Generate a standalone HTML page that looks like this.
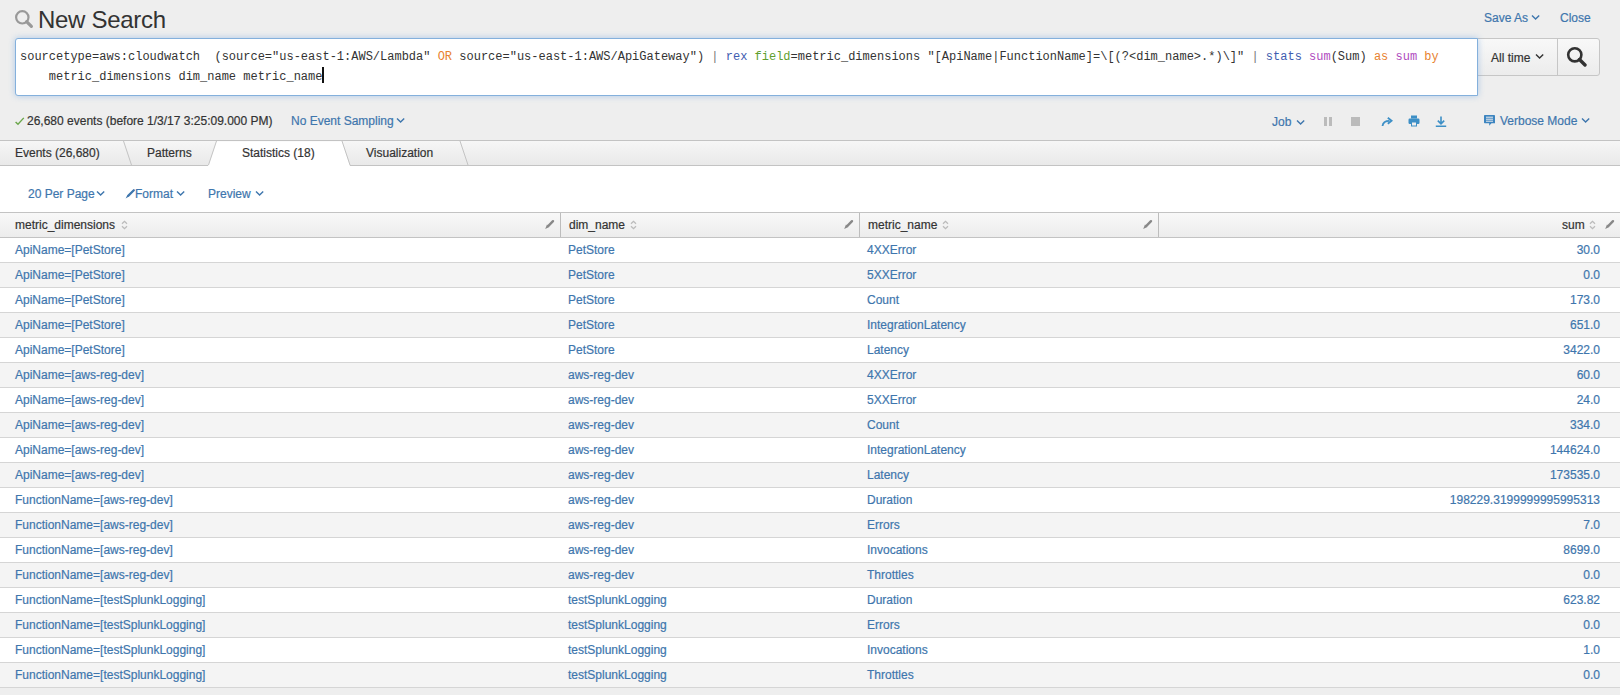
<!DOCTYPE html>
<html><head><meta charset="utf-8">
<style>
*{box-sizing:border-box;margin:0;padding:0}
html,body{width:1620px;height:695px;overflow:hidden;background:#eeeeee;font-family:"Liberation Sans",sans-serif;color:#333}
.abs{position:absolute}
.lnk{color:#3e76ad}
#title{left:38px;top:6px;font-size:24px;color:#333;white-space:nowrap;letter-spacing:-0.3px}
#sbox{left:15px;top:38px;width:1463px;height:58px;background:#fff;border:1px solid #84b0dc;border-radius:3px 0 0 3px;box-shadow:0 0 6px rgba(90,155,225,.45)}
#q{left:20px;top:47px;font-family:"Liberation Mono",monospace;font-size:12px;line-height:20px;white-space:pre;color:#333}
.pipe{color:#777}.cmd{color:#3f5db0}.fn{color:#b04cc0}.kw{color:#e8822f}.arg{color:#5f9f30}
#tp{left:1477px;top:38px;width:81px;height:38px;background:linear-gradient(#f8f8f8,#ececec);border:1px solid #c6c6c6;border-left:none}
#sb{left:1557px;top:38px;width:43px;height:38px;background:linear-gradient(#f8f8f8,#ececec);border:1px solid #c6c6c6;border-radius:0 3px 3px 0}
.t12{font-size:12px;white-space:nowrap;-webkit-text-stroke:0.2px}
#tabs{left:0;top:140px;width:1620px;height:26px;background:linear-gradient(#f6f6f6,#e9e9e9);border-top:1px solid #c3c3c3;border-bottom:1px solid #c3c3c3}
#content{left:0;top:166px;width:1620px;height:522px;background:#fff}
#thead{left:0;top:212px;width:1620px;height:26px;background:linear-gradient(#f8f8f8,#ececec);border-top:1px solid #c3c3c3;border-bottom:1px solid #c3c3c3}
.vdiv{position:absolute;top:213px;width:1px;height:24px;background:#bdbdbd}
.row{position:absolute;left:0;width:1620px;height:25px;border-bottom:1px solid #d5d5d5;font-size:12px;-webkit-text-stroke:0.2px}
.row.odd{background:#fff}.row.even{background:#f4f4f4}
.row span.r{right:20px}
.row span{position:absolute;top:5px;color:#3e76ad;white-space:nowrap}
</style></head><body>
<svg class="abs" style="left:14px;top:9px" width="21" height="21" viewBox="0 0 21 21"><circle cx="8.3" cy="8.3" r="6.2" fill="none" stroke="#999" stroke-width="2.2"/><path d="M12.6 12.6 L17.4 17.4" stroke="#999" stroke-width="3.2" stroke-linecap="round"/></svg>
<div id="title" class="abs">New Search</div>
<div class="abs t12 lnk" style="left:1484px;top:11px">Save As</div>
<svg class="abs" style="left:1531px;top:14px" width="10" height="7" viewBox="0 0 10 7"><path d="M1 1.4 L4.6 5 L8.2 1.4" fill="none" stroke="#3e76ad" stroke-width="1.4"/></svg>
<div class="abs t12 lnk" style="left:1560px;top:11px">Close</div>
<div id="tp" class="abs"></div>
<div id="sb" class="abs"></div>
<div id="sbox" class="abs"></div>
<div id="q" class="abs">sourcetype=aws:cloudwatch  (source="us-east-1:AWS/Lambda" <span class="kw">OR</span> source="us-east-1:AWS/ApiGateway") <span class="pipe">|</span> <span class="cmd">rex</span> <span class="arg">field</span>=metric_dimensions "[ApiName|FunctionName]=\[(?&lt;dim_name&gt;.*)\]" <span class="pipe">|</span> <span class="cmd">stats</span> <span class="fn">sum</span>(Sum) <span class="kw">as</span> <span class="fn">sum</span> <span class="kw">by</span>
    metric_dimensions dim_name metric_name</div>
<div class="abs" style="left:322px;top:67px;width:2px;height:16px;background:#111"></div>
<div class="abs t12" style="left:1491px;top:51px">All time</div>
<svg class="abs" style="left:1535px;top:53px" width="10" height="7" viewBox="0 0 10 7"><path d="M1 1.4 L4.6 5 L8.2 1.4" fill="none" stroke="#333" stroke-width="1.4"/></svg>
<svg class="abs" style="left:1566px;top:46px" width="23" height="21" viewBox="0 0 23 21"><circle cx="8.8" cy="8.8" r="6.6" fill="none" stroke="#333" stroke-width="2.6"/><path d="M13.5 13.5 L19 19" stroke="#333" stroke-width="3.4" stroke-linecap="round"/></svg>
<svg class="abs" style="left:15px;top:117px" width="10" height="9" viewBox="0 0 10 9"><path d="M0.6 4.9 L3.0 7.3 L8.8 0.9" fill="none" stroke="#6aa64a" stroke-width="1.4"/></svg>
<div class="abs t12" style="left:27px;top:114px">26,680 events (before 1/3/17 3:25:09.000 PM)</div>
<div class="abs t12 lnk" style="left:291px;top:114px">No Event Sampling</div>
<svg class="abs" style="left:396px;top:117px" width="10" height="7" viewBox="0 0 10 7"><path d="M1 1.4 L4.6 5 L8.2 1.4" fill="none" stroke="#3e76ad" stroke-width="1.4"/></svg>
<div class="abs t12 lnk" style="left:1272px;top:115px">Job</div>
<svg class="abs" style="left:1296px;top:118.5px" width="10" height="7" viewBox="0 0 10 7"><path d="M1 1.4 L4.6 5 L8.2 1.4" fill="none" stroke="#3e76ad" stroke-width="1.4"/></svg>
<div class="abs" style="left:1324px;top:117px;width:3px;height:9px;background:#bbb"></div>
<div class="abs" style="left:1329px;top:117px;width:3px;height:9px;background:#bbb"></div>
<div class="abs" style="left:1351px;top:117px;width:9px;height:9px;background:#bbb"></div>
<svg class="abs" style="left:1381px;top:116px" width="12" height="11" viewBox="0 0 12 11"><path d="M1.5 10 C2 6 4.5 4.8 8.5 4.8" fill="none" stroke="#3d8fc6" stroke-width="1.8"/><path d="M6.8 1.8 L10.6 4.8 L6.8 7.8" fill="none" stroke="#3d8fc6" stroke-width="1.8"/></svg>
<svg class="abs" style="left:1408px;top:115px" width="12" height="12" viewBox="0 0 12 12"><rect x="3" y="0.5" width="6" height="3" fill="#3d8fc6"/><rect x="0.5" y="3.5" width="11" height="5.5" rx="1.2" fill="#3d8fc6"/><rect x="3" y="7" width="6" height="4.5" fill="#3d8fc6"/><rect x="4" y="7.5" width="4" height="3" fill="#eee"/></svg>
<svg class="abs" style="left:1435px;top:116px" width="12" height="11" viewBox="0 0 12 11"><path d="M6 0.5 V7.5 M2.8 4.6 L6 7.8 L9.2 4.6 M0.8 10.2 H11.2" fill="none" stroke="#3d8fc6" stroke-width="1.6"/></svg>
<svg class="abs" style="left:1484px;top:115px" width="11" height="11" viewBox="0 0 11 11"><path d="M0.8 0 H10.2 Q11 0 11 0.8 V8.3 H7.5 L5.2 10.8 V8.3 H0.8 Q0 8.3 0 7.5 V0.8 Q0 0 0.8 0 Z" fill="#3d85c0"/><path d="M2 2.2 H9 M2 4.2 H9 M2 6.2 H9" stroke="#eee" stroke-width="1"/></svg>
<div class="abs t12 lnk" style="left:1500px;top:114px">Verbose Mode</div>
<svg class="abs" style="left:1581px;top:117px" width="10" height="7" viewBox="0 0 10 7"><path d="M1 1.4 L4.6 5 L8.2 1.4" fill="none" stroke="#3e76ad" stroke-width="1.4"/></svg>
<div id="tabs" class="abs"></div>
<div id="content" class="abs"></div>
<svg class="abs" style="left:0;top:140px" width="500" height="27" viewBox="0 0 500 27"><polygon points="216.5,1.5 342,1.5 350,26 208,26" fill="#fff"/><path d="M123.5 1 L131.5 25 M216.5 1 L208.5 25 M342 1 L350 25 M460 1 L468 25" stroke="#c3c3c3" stroke-width="1" fill="none"/><path d="M0 0.5 H500" stroke="#c3c3c3" stroke-width="1"/></svg>
<div class="abs t12" style="left:15px;top:146px">Events (26,680)</div>
<div class="abs t12" style="left:147px;top:146px">Patterns</div>
<div class="abs t12" style="left:242px;top:146px">Statistics (18)</div>
<div class="abs t12" style="left:366px;top:146px">Visualization</div>
<div class="abs t12 lnk" style="left:28px;top:187px">20 Per Page</div>
<svg class="abs" style="left:96px;top:190px" width="10" height="7" viewBox="0 0 10 7"><path d="M1 1.4 L4.6 5 L8.2 1.4" fill="none" stroke="#3e76ad" stroke-width="1.4"/></svg>
<svg class="abs" style="left:125px;top:189px" width="10" height="10" viewBox="0 0 10 10"><path d="M8.8 1.2 L3.4 6.6" stroke="#3e76ad" stroke-width="2.2" stroke-linecap="round"/><path d="M2.4 6 L4 7.6 L0.6 9.4 Z" fill="#3e76ad"/></svg>
<div class="abs t12 lnk" style="left:135px;top:187px">Format</div>
<svg class="abs" style="left:176px;top:190px" width="10" height="7" viewBox="0 0 10 7"><path d="M1 1.4 L4.6 5 L8.2 1.4" fill="none" stroke="#3e76ad" stroke-width="1.4"/></svg>
<div class="abs t12 lnk" style="left:208px;top:187px">Preview</div>
<svg class="abs" style="left:255px;top:190px" width="10" height="7" viewBox="0 0 10 7"><path d="M1 1.4 L4.6 5 L8.2 1.4" fill="none" stroke="#3e76ad" stroke-width="1.4"/></svg>
<div id="thead" class="abs"></div>
<div class="vdiv" style="left:560px"></div>
<div class="vdiv" style="left:859px"></div>
<div class="vdiv" style="left:1158px"></div>
<div class="abs t12" style="left:15px;top:218px">metric_dimensions</div>
<svg class="abs" style="left:121px;top:220px" width="7" height="10" viewBox="0 0 7 10"><path d="M1 3.8 L3.5 1.3 L6 3.8 M1 6.2 L3.5 8.7 L6 6.2" fill="none" stroke="#bbb" stroke-width="1.3"/></svg><svg class="abs" style="left:544px;top:219px" width="11" height="11" viewBox="0 0 11 11"><path d="M9 2.2 L4.4 6.8" stroke="#888" stroke-width="2.4" stroke-linecap="round"/><path d="M3 5.6 L5.4 8 L1.2 10 Z" fill="#888"/></svg>
<div class="abs t12" style="left:569px;top:218px">dim_name</div>
<svg class="abs" style="left:630px;top:220px" width="7" height="10" viewBox="0 0 7 10"><path d="M1 3.8 L3.5 1.3 L6 3.8 M1 6.2 L3.5 8.7 L6 6.2" fill="none" stroke="#bbb" stroke-width="1.3"/></svg><svg class="abs" style="left:843px;top:219px" width="11" height="11" viewBox="0 0 11 11"><path d="M9 2.2 L4.4 6.8" stroke="#888" stroke-width="2.4" stroke-linecap="round"/><path d="M3 5.6 L5.4 8 L1.2 10 Z" fill="#888"/></svg>
<div class="abs t12" style="left:868px;top:218px">metric_name</div>
<svg class="abs" style="left:942px;top:220px" width="7" height="10" viewBox="0 0 7 10"><path d="M1 3.8 L3.5 1.3 L6 3.8 M1 6.2 L3.5 8.7 L6 6.2" fill="none" stroke="#bbb" stroke-width="1.3"/></svg><svg class="abs" style="left:1142px;top:219px" width="11" height="11" viewBox="0 0 11 11"><path d="M9 2.2 L4.4 6.8" stroke="#888" stroke-width="2.4" stroke-linecap="round"/><path d="M3 5.6 L5.4 8 L1.2 10 Z" fill="#888"/></svg>
<div class="abs t12" style="left:1562px;top:218px">sum</div>
<svg class="abs" style="left:1589px;top:220px" width="7" height="10" viewBox="0 0 7 10"><path d="M1 3.8 L3.5 1.3 L6 3.8 M1 6.2 L3.5 8.7 L6 6.2" fill="none" stroke="#bbb" stroke-width="1.3"/></svg><svg class="abs" style="left:1604px;top:219px" width="11" height="11" viewBox="0 0 11 11"><path d="M9 2.2 L4.4 6.8" stroke="#888" stroke-width="2.4" stroke-linecap="round"/><path d="M3 5.6 L5.4 8 L1.2 10 Z" fill="#888"/></svg>
<div class="row odd" style="top:238px"><span style="left:15px">ApiName=[PetStore]</span><span style="left:568px">PetStore</span><span style="left:867px">4XXError</span><span class="r">30.0</span></div>
<div class="row even" style="top:263px"><span style="left:15px">ApiName=[PetStore]</span><span style="left:568px">PetStore</span><span style="left:867px">5XXError</span><span class="r">0.0</span></div>
<div class="row odd" style="top:288px"><span style="left:15px">ApiName=[PetStore]</span><span style="left:568px">PetStore</span><span style="left:867px">Count</span><span class="r">173.0</span></div>
<div class="row even" style="top:313px"><span style="left:15px">ApiName=[PetStore]</span><span style="left:568px">PetStore</span><span style="left:867px">IntegrationLatency</span><span class="r">651.0</span></div>
<div class="row odd" style="top:338px"><span style="left:15px">ApiName=[PetStore]</span><span style="left:568px">PetStore</span><span style="left:867px">Latency</span><span class="r">3422.0</span></div>
<div class="row even" style="top:363px"><span style="left:15px">ApiName=[aws-reg-dev]</span><span style="left:568px">aws-reg-dev</span><span style="left:867px">4XXError</span><span class="r">60.0</span></div>
<div class="row odd" style="top:388px"><span style="left:15px">ApiName=[aws-reg-dev]</span><span style="left:568px">aws-reg-dev</span><span style="left:867px">5XXError</span><span class="r">24.0</span></div>
<div class="row even" style="top:413px"><span style="left:15px">ApiName=[aws-reg-dev]</span><span style="left:568px">aws-reg-dev</span><span style="left:867px">Count</span><span class="r">334.0</span></div>
<div class="row odd" style="top:438px"><span style="left:15px">ApiName=[aws-reg-dev]</span><span style="left:568px">aws-reg-dev</span><span style="left:867px">IntegrationLatency</span><span class="r">144624.0</span></div>
<div class="row even" style="top:463px"><span style="left:15px">ApiName=[aws-reg-dev]</span><span style="left:568px">aws-reg-dev</span><span style="left:867px">Latency</span><span class="r">173535.0</span></div>
<div class="row odd" style="top:488px"><span style="left:15px">FunctionName=[aws-reg-dev]</span><span style="left:568px">aws-reg-dev</span><span style="left:867px">Duration</span><span class="r">198229.3199999995995313</span></div>
<div class="row even" style="top:513px"><span style="left:15px">FunctionName=[aws-reg-dev]</span><span style="left:568px">aws-reg-dev</span><span style="left:867px">Errors</span><span class="r">7.0</span></div>
<div class="row odd" style="top:538px"><span style="left:15px">FunctionName=[aws-reg-dev]</span><span style="left:568px">aws-reg-dev</span><span style="left:867px">Invocations</span><span class="r">8699.0</span></div>
<div class="row even" style="top:563px"><span style="left:15px">FunctionName=[aws-reg-dev]</span><span style="left:568px">aws-reg-dev</span><span style="left:867px">Throttles</span><span class="r">0.0</span></div>
<div class="row odd" style="top:588px"><span style="left:15px">FunctionName=[testSplunkLogging]</span><span style="left:568px">testSplunkLogging</span><span style="left:867px">Duration</span><span class="r">623.82</span></div>
<div class="row even" style="top:613px"><span style="left:15px">FunctionName=[testSplunkLogging]</span><span style="left:568px">testSplunkLogging</span><span style="left:867px">Errors</span><span class="r">0.0</span></div>
<div class="row odd" style="top:638px"><span style="left:15px">FunctionName=[testSplunkLogging]</span><span style="left:568px">testSplunkLogging</span><span style="left:867px">Invocations</span><span class="r">1.0</span></div>
<div class="row even" style="top:663px"><span style="left:15px">FunctionName=[testSplunkLogging]</span><span style="left:568px">testSplunkLogging</span><span style="left:867px">Throttles</span><span class="r">0.0</span></div>
</body></html>
